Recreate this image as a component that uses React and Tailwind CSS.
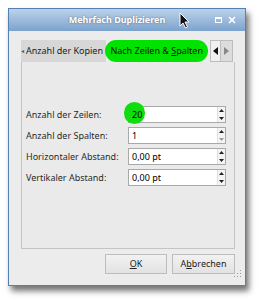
import React from 'react';

const font = { fontFamily: '"Noto Sans", "Open Sans", sans-serif' };

function SpinInput({ value, dim, highlight }) {
  return (
    <div className="relative flex h-[17px] w-[98px] border border-[#a9a9a9] bg-white">
      {highlight && <div className="absolute left-[-5px] top-[-5px] h-[22px] w-[21px] rounded-full bg-[#10dd10]" />}
      <div className="relative flex flex-1 items-center pl-[3px] text-[9px] text-black">{value}</div>
      <div className="flex w-[8px] flex-col items-center justify-between border-l border-[#e0e0e0] bg-[#f4f4f4] py-[2px]">
        <svg width="5" height="3" viewBox="0 0 5 3"><path d="M0 3 L2.5 0 L5 3 Z" fill="#222" /></svg>
        <svg width="5" height="3" viewBox="0 0 5 3"><path d="M0 0 L2.5 3 L5 0 Z" fill={dim ? '#999' : '#222'} /></svg>
      </div>
    </div>
  );
}

function Row({ label, value, dim, highlight }) {
  return (
    <div className="flex h-[17px] items-center">
      <div className="w-[102px] whitespace-nowrap text-[9px] text-[#2a2a2a]">{label}</div>
      <SpinInput value={value} dim={dim} highlight={highlight} />
    </div>
  );
}

export default function App() {
  return (
    <div className="h-[300px] w-[261px] bg-white pl-[8px] pt-[8px]" style={font}>
      <div className="flex h-[278px] w-[238px] flex-col border border-[#5580b2] shadow-[3px_5px_6px_rgba(0,0,0,0.55)]">
        <div className="relative flex h-[22px] items-center bg-gradient-to-b from-[#bcd2ea] to-[#7ca3cd]">
          <div className="flex-1 pl-[10px] text-center text-[9px] font-bold text-white [text-shadow:0_0_2px_rgba(0,0,0,0.45)]">
            Mehrfach Duplizieren
          </div>
          <div className="flex w-[30px] items-center gap-[6px]">
            <div className="h-[6px] w-[7px] border border-t-2 border-white" />
            <svg width="8" height="8" viewBox="0 0 8 8"><path d="M1 1 L7 7 M7 1 L1 7" stroke="white" strokeWidth="1.6" /></svg>
          </div>
          <svg className="absolute left-[170px] top-[3px]" width="11" height="17" viewBox="0 0 11 17">
            <path d="M1 1 L1 14 L4 11 L6.5 16 L8.5 15 L6 10 L10 10 Z" fill="#111" stroke="white" strokeWidth="1" />
          </svg>
        </div>
        <div className="flex flex-1 flex-col bg-[#ececec] px-[12px] pt-[9px]">
          <div className="flex h-[22px] items-stretch">
            <div className="flex w-[86px] items-center overflow-hidden whitespace-nowrap bg-[#d7d7d7] text-[9px] text-[#222]">
              <span className="mr-[2px] text-[6px] text-[#3a5f8a]">◂</span>Anzahl der Kopien
            </div>
            <div className="ml-[-1px] flex w-[104px] items-center justify-center whitespace-nowrap rounded-full bg-[#00e300] text-[9px] text-[#111]">
              Nach Zeilen &amp;&nbsp;<span className="underline">S</span>palten
            </div>
            <div className="ml-[2px] flex w-[11px] items-center justify-center border border-[#bdbdbd] bg-[#f0f0f0]">
              <svg width="5" height="8" viewBox="0 0 5 8"><path d="M5 0 L0 4 L5 8 Z" fill="#111" /></svg>
            </div>
            <div className="flex w-[12px] items-center justify-center border border-l-0 border-[#bdbdbd] bg-[#dcdcdc]">
              <svg width="5" height="8" viewBox="0 0 5 8"><path d="M0 0 L5 4 L0 8 Z" fill="#888" /></svg>
            </div>
          </div>
          <div className="flex h-[187px] w-[214px] flex-col gap-[4px] border border-t-0 border-[#c4c4c4] bg-[#eaeaea] pl-[4px] pt-[44px]">
            <Row label="Anzahl der Zeilen:" value="20" highlight />
            <Row label="Anzahl der Spalten:" value="1" dim />
            <Row label="Horizontaler Abstand:" value="0,00 pt" />
            <Row label="Vertikaler Abstand:" value="0,00 pt" />
          </div>
          <div className="mt-[5px] flex w-[214px] justify-end gap-[5px]">
            <div className="flex h-[20px] w-[62px] items-center justify-center border border-[#bdbdbd] bg-gradient-to-b from-[#f2f2f2] to-[#e2e2e2] text-[9px] text-[#222]">
              <span className="underline">O</span>K
            </div>
            <div className="flex h-[20px] w-[63px] items-center justify-center border border-[#bdbdbd] bg-gradient-to-b from-[#f2f2f2] to-[#e2e2e2] text-[9px] text-[#222]">
              A<span className="underline">b</span>brechen
            </div>
          </div>
          <div className="flex justify-end">
            <div className="mr-[-8px] mt-[-4px] grid grid-cols-3 gap-[2px]">
              <span />
              <span />
              <span className="h-[1px] w-[1px] bg-[#999]" />
              <span />
              <span className="h-[1px] w-[1px] bg-[#999]" />
              <span className="h-[1px] w-[1px] bg-[#999]" />
              <span className="h-[1px] w-[1px] bg-[#999]" />
              <span className="h-[1px] w-[1px] bg-[#999]" />
              <span className="h-[1px] w-[1px] bg-[#999]" />
            </div>
          </div>
        </div>
      </div>
    </div>
  );
}
